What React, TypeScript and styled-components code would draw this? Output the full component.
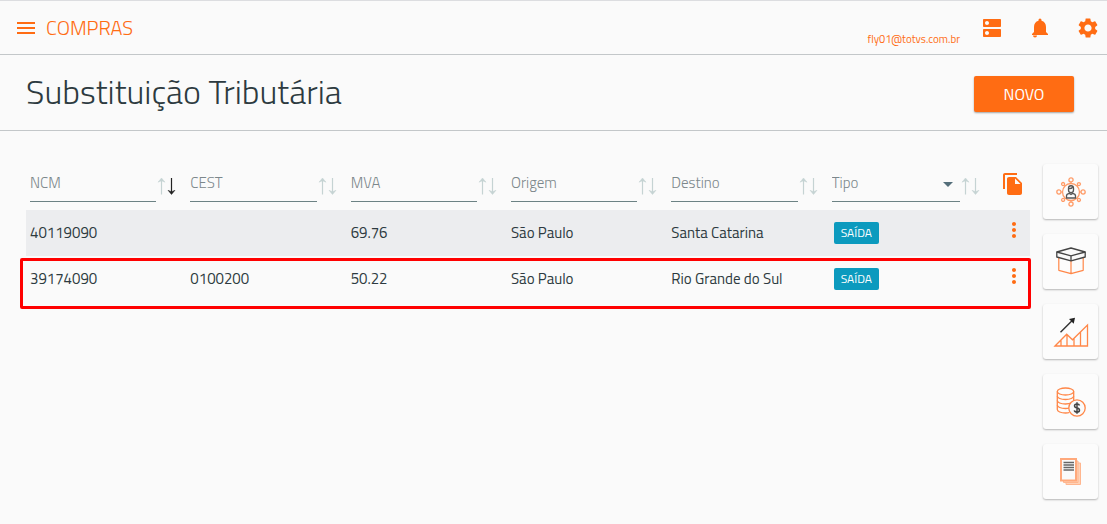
import React from "react";
import styled, { createGlobalStyle } from "styled-components";
import {
  MdMenu,
  MdDns,
  MdSettings,
  MdFileCopy,
  MdMoreVert,
} from "react-icons/md";

const color = {
  brand: "#ff6c13",
  ink: "#2d3a40",
  muted: "#7c878b",
  line: "#c3c7c9",
  field: "#6c8284",
  faint: "#c5d3d3",
  stripe: "#ecedef",
  badge: "#0c9abe",
  page: "#fafafa",
};

const GlobalStyle = createGlobalStyle`
  *, *::before, *::after { box-sizing: border-box; }
  body {
    margin: 0;
    background: ${color.page};
    color: ${color.ink};
    font-family: "Titillium Web", Roboto, "Open Sans", sans-serif;
    font-size: 15px;
    line-height: 20px;
  }
  button, input, select { font: inherit; color: inherit; }
`;

const TopBar = styled.header`
  display: flex;
  align-items: center;
  height: 55px;
  padding: 0 7px 0 14px;
  border-top: 1px solid #dcdde0;
  border-bottom: 1px solid ${color.line};
  color: ${color.brand};
`;

const IconButton = styled.button`
  display: inline-flex;
  align-items: center;
  justify-content: center;
  width: 24px;
  height: 24px;
  padding: 0;
  border: 0;
  background: none;
  color: ${color.brand};
  cursor: pointer;
  flex: none;
`;

const ModuleName = styled.span`
  margin-left: 8px;
  font-size: 20px;
  font-weight: 300;
  line-height: 24px;
`;

const Account = styled.a`
  margin-left: auto;
  padding-top: 22px;
  color: ${color.brand};
  font-size: 11px;
  text-decoration: none;
`;

const TopActions = styled.nav`
  display: flex;
  gap: 24px;
  margin-left: 20px;
`;

const TitleBar = styled.section`
  display: flex;
  align-items: center;
  justify-content: space-between;
  height: 76px;
  padding: 0 33px 0 26px;
  border-bottom: 1px solid ${color.line};
`;

const Title = styled.h1`
  margin: 0;
  padding-bottom: 4px;
  font-size: 34px;
  font-weight: 300;
  line-height: 44px;
`;

const PrimaryButton = styled.button`
  width: 100px;
  height: 36px;
  margin-top: 2px;
  border: 0;
  border-radius: 2px;
  background: ${color.brand};
  box-shadow: 0 1px 2px rgba(0, 0, 0, 0.35);
  color: #fff;
  font-size: 16px;
  cursor: pointer;
`;

const Content = styled.main`
  display: flex;
  align-items: flex-start;
  padding: 33px 9px 24px 26px;
  gap: 13px;
`;

const TableArea = styled.div`
  position: relative;
  flex: 1;
  min-width: 0;
`;

const Table = styled.table`
  width: 100%;
  border-collapse: collapse;
  table-layout: fixed;
  text-align: left;
`;

const DataCol = styled.col`
  width: 15.97%;
`;

const ActionCol = styled.col`
  width: 40px;
`;

const HeadCell = styled.th`
  height: 46px;
  padding: 0 10px 8px 4px;
  font-weight: 300;
  vertical-align: bottom;
`;

const HeadAction = styled(HeadCell)`
  padding: 0 5px 9px;
  text-align: right;
`;

const Filter = styled.div`
  display: flex;
  align-items: center;
`;

const FieldBox = styled.div`
  position: relative;
  flex: 1;
  min-width: 0;
`;

const TextField = styled.input`
  display: block;
  width: 100%;
  height: 38px;
  padding: 0;
  border: 0;
  border-bottom: 1px solid ${color.field};
  border-radius: 0;
  background: none;
  outline: 0;
  &::placeholder {
    color: ${color.muted};
    opacity: 1;
  }
`;

const SelectField = styled.select`
  display: block;
  appearance: none;
  width: 100%;
  height: 38px;
  padding: 0;
  border: 0;
  border-bottom: 1px solid ${color.field};
  border-radius: 0;
  background: none;
  color: ${color.muted};
  outline: 0;
`;

const Caret = styled.svg`
  position: absolute;
  right: 7px;
  top: 18px;
  pointer-events: none;
`;

const SortButton = styled.button`
  display: flex;
  width: 20px;
  height: 20px;
  margin-top: 6px;
  padding: 0;
  border: 0;
  background: none;
  cursor: pointer;
  flex: none;
`;

const Row = styled.tr<{ $striped?: boolean }>`
  height: 46px;
  background: ${(p) => (p.$striped ? color.stripe : "transparent")};
`;

const Cell = styled.td`
  padding: 0 4px;
  white-space: nowrap;
`;

const ActionCell = styled(Cell)`
  padding: 0 4px 6px;
  text-align: right;
  line-height: 0;
`;

const Badge = styled.span`
  display: inline-block;
  margin-left: 2px;
  padding: 0 7px;
  border-radius: 2px;
  background: ${color.badge};
  color: #fff;
  font-size: 12px;
  line-height: 22px;
`;

const Highlight = styled.div`
  position: absolute;
  left: -6px;
  right: -1px;
  bottom: -7px;
  height: 51px;
  border: 3px solid #ff0000;
  border-radius: 2px;
  pointer-events: none;
`;

const Rail = styled.aside`
  display: flex;
  flex-direction: column;
  gap: 15px;
  flex: none;
`;

const Tile = styled.button`
  display: flex;
  align-items: center;
  justify-content: center;
  width: 55px;
  height: 55px;
  padding: 0;
  border: 0;
  border-radius: 3px;
  background: #fcfcfc;
  box-shadow: 0 1px 2px rgba(0, 0, 0, 0.28);
  cursor: pointer;
`;

const BellIcon = () => (
  <svg width="24" height="24" viewBox="0 0 24 24" fill="currentColor">
    <path d="M18 16v-5c0-3.100-1.600-5.600-4.500-6.300V4a1.500 1.500 0 0 0-3 0v.7C7.600 5.400 6 7.900 6 11v5l-2 2v1h16v-1z" />
    <path d="M5 19.500h4a2 2 0 0 1-4 0z" />
  </svg>
);

const SortArrows = ({ sorted }: { sorted?: boolean }) => (
  <svg width="20" height="20" viewBox="0 0 20 20" fill="none" strokeWidth="1.200">
    <g stroke={color.faint} fill={color.faint}>
      <path d="M5.500 18.500V3" />
      <path d="M2 6.200L5.500 2 9 6.200 5.500 4.800z" strokeWidth=".5" />
    </g>
    <g stroke={sorted ? "#222" : color.faint} fill={sorted ? "#222" : color.faint}>
      <path d="M15.500 2v15.500" />
      <path d="M12 14.300l3.500 4.200 3.500-4.200-3.500 1.400z" strokeWidth=".5" />
    </g>
  </svg>
);

const CustomersIcon = () => {
  const spokes = [0, 45, 90, 135, 180, 225, 270, 315];
  return (
    <svg width="32" height="32" viewBox="0 0 32 32" fill="none" stroke="#ff9c68">
      <circle cx="16" cy="16" r="8.500" strokeWidth="1.300" />
      {spokes.map((a) => {
        const major = a % 90 === 0;
        return (
          <g key={a} transform={`rotate(${a} 16 16)`}>
            <path d={major ? "M16 7.500V5.500" : "M16 7.500V6"} />
            <circle
              cx="16"
              cy={major ? 3.9 : 4.8}
              r={major ? 2.1 : 1.5}
              fill={color.page}
              strokeWidth="1.300"
            />
          </g>
        );
      })}
      <g stroke="#555" fill={color.page} strokeWidth="1.300">
        <path d="M11.500 22v-2.300c0-1.400 1.300-2 2.900-2.300l1.600 1 1.600-1c1.600.3 2.900.9 2.900 2.300V22z" />
        <path d="M13.500 12.200c0-3.300 5-3.300 5 0v1.700c0 3.500-5 3.500-5 0z" />
        <path d="M13.500 12.600c1.900.2 3.400-.3 4.300-1.300" />
      </g>
    </svg>
  );
};

const BoxIcon = () => (
  <svg width="32" height="32" viewBox="0 0 32 32" fill="none" strokeLinejoin="round">
    <path d="M3.800 12v12.300L16 27.700l12.200-3.400V12M16 15v12.500" stroke="#ff8748" strokeWidth="1.200" />
    <path d="M1.800 6L16 2l14.200 4v5L16 14.800 1.800 11z" fill={color.page} stroke="#444" strokeWidth="1.300" />
    <path d="M1.800 6L16 9.800 30.200 6M16 9.800v5" stroke="#444" strokeWidth="1.300" />
  </svg>
);

const GrowthIcon = () => (
  <svg width="36" height="32" viewBox="0 0 36 32" fill="none">
    <path
      d="M2 30L13.700 18.200l5.800 5.600L34.500 9v21zM8 24v6M14 18.500V30M21 22.500V30M27.500 16v14"
      stroke="#ff8748"
      strokeWidth="1.300"
    />
    <path d="M7.500 16.200L19 4.800" stroke="#333" strokeWidth="1.500" />
    <path d="M22 1.700l-1.300 6-4.700-4.600z" fill="#222" />
  </svg>
);

const CoinsIcon = () => (
  <svg width="32" height="32" viewBox="0 0 32 32" fill="none" stroke="#ff8748" strokeWidth="1.300">
    <ellipse cx="10.500" cy="5.500" rx="8.200" ry="3.500" />
    <path d="M2.300 5.500v18c0 2 3.600 3.500 8.200 3.500 1.500 0 3-.2 4-.5M18.700 5.500v9.500" />
    <path d="M2.300 10c0 2 3.600 3.500 8.200 3.500s8.200-1.500 8.200-3.500M2.300 14.500c0 2 3.600 3.500 8.200 3.500 2.500 0 4.500-.4 6-1.100M2.300 19c0 2 3.600 3.500 8.200 3.500 1.200 0 2.500-.1 3.500-.4" />
    <circle cx="22" cy="22" r="8.200" fill={color.page} />
    <path
      d="M24.500 19.500c-.3-1.100-1.300-1.500-2.500-1.500-3.300 0-3.300 3.600 0 4s3.300 4 0 4c-1.400 0-2.500-.6-2.700-1.700M22 16.200v11.600"
      stroke="#444"
      strokeWidth="1.500"
    />
  </svg>
);

const ReportsIcon = () => (
  <svg width="24" height="30" viewBox="0 0 24 30" fill="#ffd3b8" stroke="#ffb68f">
    <path d="M7 6h14.500v21.500H7z" />
    <path d="M4.500 4H19v21.500H4.500z" />
    <path d="M2 2h15v21.500H2z" fill={color.page} stroke="#ffa97c" strokeWidth="2" />
    <path d="M4.500 5.500h10.500M4.500 8h10.500M4.500 10.500h10.500M4.500 13h10.500" stroke="#666" strokeWidth="1.300" />
  </svg>
);

const filters = ["NCM", "CEST", "MVA", "Origem", "Destino"];

const rows = [
  { ncm: "40119090", cest: "", mva: "69.76", origin: "São Paulo", target: "Santa Catarina", kind: "SAÍDA" },
  { ncm: "39174090", cest: "0100200", mva: "50.22", origin: "São Paulo", target: "Rio Grande do Sul", kind: "SAÍDA" },
];

const shortcuts = [
  { label: "Clientes", Icon: CustomersIcon },
  { label: "Produtos", Icon: BoxIcon },
  { label: "Vendas", Icon: GrowthIcon },
  { label: "Financeiro", Icon: CoinsIcon },
  { label: "Relatórios", Icon: ReportsIcon },
];

export default function App() {
  return (
    <>
      <GlobalStyle />
      <TopBar>
        <IconButton aria-label="Menu">
          <MdMenu size={24} />
        </IconButton>
        <ModuleName>COMPRAS</ModuleName>
        <Account href="#conta">fly01@totvs.com.br</Account>
        <TopActions>
          <IconButton aria-label="Aplicativos">
            <MdDns size={24} />
          </IconButton>
          <IconButton aria-label="Notificações">
            <BellIcon />
          </IconButton>
          <IconButton aria-label="Configurações">
            <MdSettings size={24} />
          </IconButton>
        </TopActions>
      </TopBar>

      <TitleBar>
        <Title>Substituição Tributária</Title>
        <PrimaryButton>NOVO</PrimaryButton>
      </TitleBar>

      <Content>
        <TableArea>
          <Table>
            <colgroup>
              {filters.map((name) => (
                <DataCol key={name} />
              ))}
              <col />
              <ActionCol />
            </colgroup>
            <thead>
              <tr>
                {filters.map((name, i) => (
                  <HeadCell key={name} scope="col">
                    <Filter>
                      <FieldBox>
                        <TextField aria-label={name} placeholder={name} />
                      </FieldBox>
                      <SortButton aria-label={`Ordenar por ${name}`}>
                        <SortArrows sorted={i === 0} />
                      </SortButton>
                    </Filter>
                  </HeadCell>
                ))}
                <HeadCell scope="col">
                  <Filter>
                    <FieldBox>
                      <SelectField aria-label="Tipo" defaultValue="">
                        <option value="">Tipo</option>
                      </SelectField>
                      <Caret width="10" height="5" viewBox="0 0 10 5">
                        <path d="M0 0h10L5 5z" fill="#546e7a" />
                      </Caret>
                    </FieldBox>
                    <SortButton aria-label="Ordenar por Tipo">
                      <SortArrows />
                    </SortButton>
                  </Filter>
                </HeadCell>
                <HeadAction scope="col">
                  <IconButton aria-label="Copiar">
                    <MdFileCopy size={24} />
                  </IconButton>
                </HeadAction>
              </tr>
            </thead>
            <tbody>
              {rows.map((r, i) => (
                <Row key={r.ncm} $striped={i % 2 === 0}>
                  <Cell>{r.ncm}</Cell>
                  <Cell>{r.cest}</Cell>
                  <Cell>{r.mva}</Cell>
                  <Cell>{r.origin}</Cell>
                  <Cell>{r.target}</Cell>
                  <Cell>
                    <Badge>{r.kind}</Badge>
                  </Cell>
                  <ActionCell>
                    <IconButton aria-label="Mais opções">
                      <MdMoreVert size={24} />
                    </IconButton>
                  </ActionCell>
                </Row>
              ))}
            </tbody>
          </Table>
          <Highlight />
        </TableArea>
        <Rail>
          {shortcuts.map(({ label, Icon }) => (
            <Tile key={label} aria-label={label}>
              <Icon />
            </Tile>
          ))}
        </Rail>
      </Content>
    </>
  );
}
